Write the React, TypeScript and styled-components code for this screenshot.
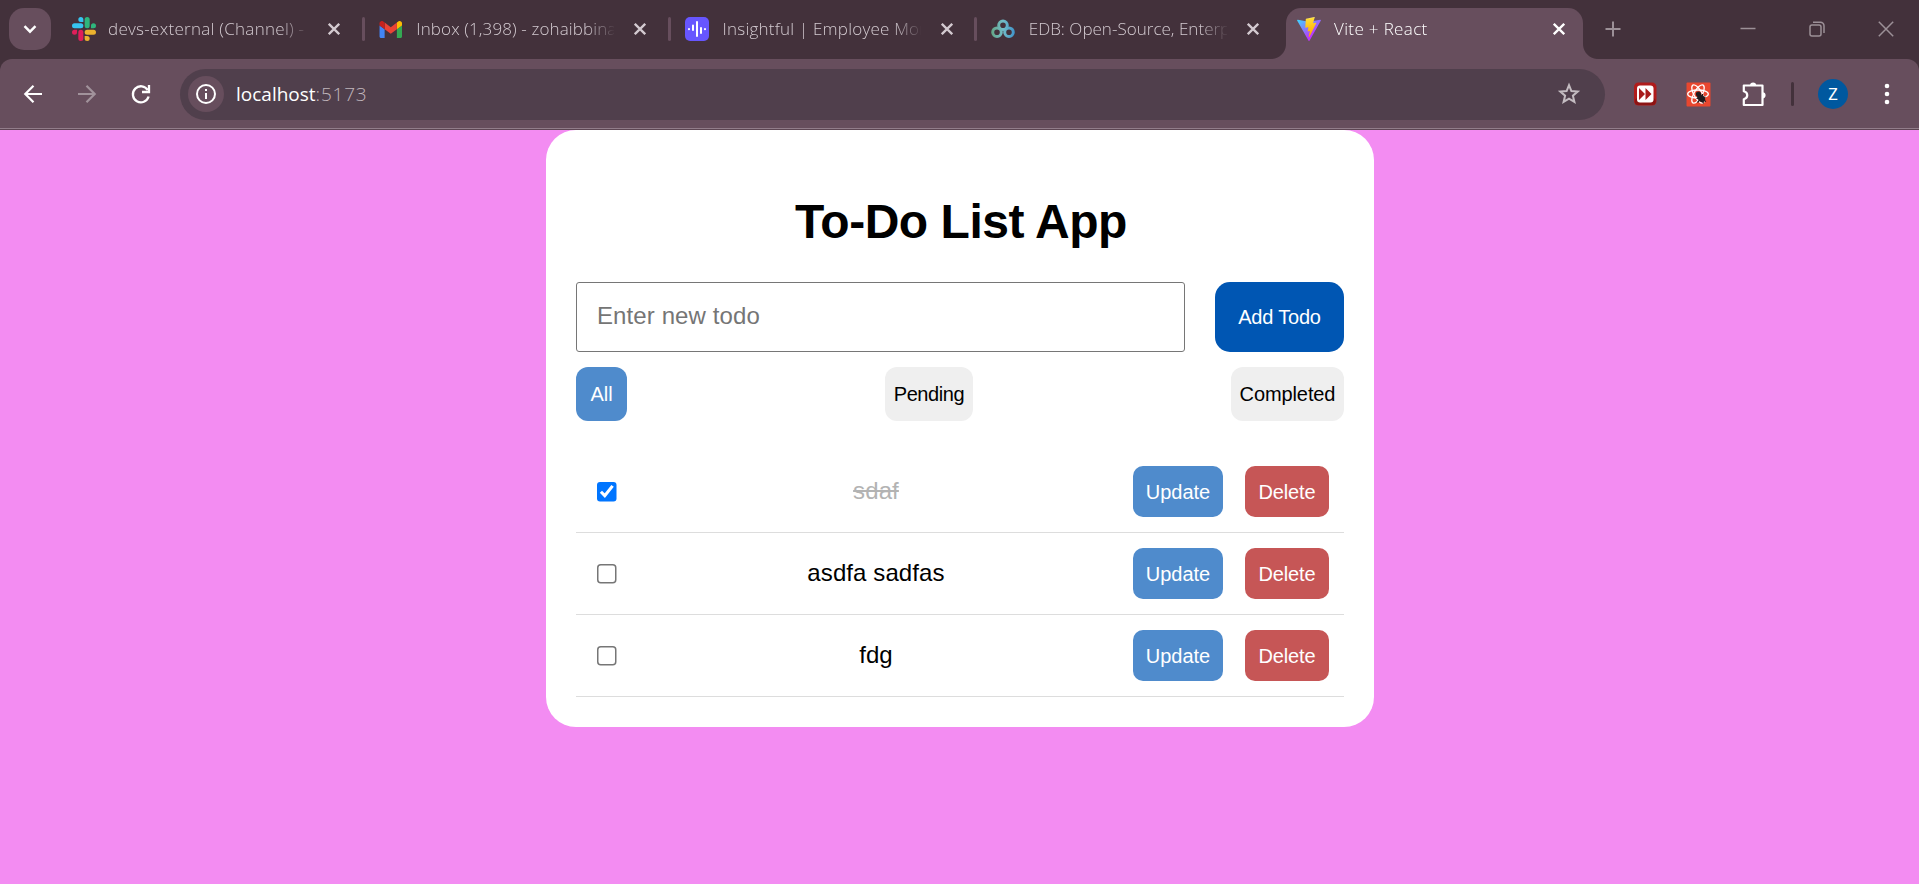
import React from 'react';
import styled, { createGlobalStyle, css } from 'styled-components';

const GlobalStyle = createGlobalStyle`
  *, *::before, *::after { box-sizing: border-box; }
  html, body { margin: 0; padding: 0; }
  body { background: #f38cf2; font-family: "Liberation Sans", Arial, sans-serif; }
  button, input { font-family: inherit; }
`;

const Screen = styled.div`
  width: 1919px;
  height: 884px;
  overflow: hidden;
  display: flex;
  flex-direction: column;
  background: #f38cf2;
`;

/* ---------- browser chrome ---------- */

const Browser = styled.header`
  flex: none;
  background: #43313b;
  font-family: "Open Sans", "Noto Sans", sans-serif;
`;

const TabStrip = styled.div`
  height: 59px;
  display: flex;
  align-items: flex-start;
  padding: 8px 0 0 9px;
`;

const TabSearch = styled.button`
  width: 42px;
  height: 42px;
  margin-right: 9px;
  padding: 0;
  border: 0;
  border-radius: 15px;
  background: #674e5d;
  display: flex;
  align-items: center;
  justify-content: center;
`;

const Tab = styled.div<{ $active?: boolean }>`
  position: relative;
  flex: none;
  display: flex;
  align-items: center;
  width: 306.25px;
  height: 42px;
  padding-left: 12px;
  color: #d3cad0;
  ${(p) =>
    p.$active &&
    css`
      width: 297px;
      height: 51px;
      margin-left: 1px;
      padding: 0 0 9px 11px;
      border-radius: 15px 15px 0 0;
      background: #674e5d;
      color: #fff;
      &::before,
      &::after {
        content: '';
        position: absolute;
        bottom: 0;
        width: 15px;
        height: 15px;
      }
      &::before {
        left: -15px;
        background: radial-gradient(circle at 0 0, transparent 14.5px, #674e5d 15.5px);
      }
      &::after {
        right: -15px;
        background: radial-gradient(circle at 100% 0, transparent 14.5px, #674e5d 15.5px);
      }
    `}
`;

const Favicon = styled.span`
  flex: none;
  width: 24px;
  height: 24px;
  margin-right: 12px;
  display: flex;
  align-items: center;
  justify-content: center;
`;

const TabTitle = styled.span<{ $tracking: number; $indent: number }>`
  flex: none;
  width: 200px;
  padding-left: ${(p) => p.$indent}px;
  overflow: hidden;
  white-space: pre;
  font-size: 17px;
  font-weight: 300;
  line-height: 26px;
  letter-spacing: ${(p) => p.$tracking}px;
  mask-image: linear-gradient(to right, #000 172px, transparent 202px);
`;

const CloseSlot = styled.span`
  width: 24px;
  margin-left: 14px;
  display: flex;
  justify-content: center;
`;

const TabDivider = styled.span`
  width: 3px;
  height: 24px;
  margin-left: auto;
  margin-right: 1.5px;
  border-radius: 1.5px;
  background: #674e5d;
`;

const NewTab = styled.span`
  width: 16px;
  height: 42px;
  margin-left: 22px;
  display: flex;
  align-items: center;
`;

const WindowControls = styled.div`
  height: 42px;
  margin-left: auto;
  margin-right: 25px;
  display: flex;
  align-items: center;
  gap: 53px;
`;

const Toolbar = styled.div`
  height: 71px;
  display: flex;
  align-items: center;
  padding: 0 22px 1px 21px;
  border-radius: 12px 12px 0 0;
  background: linear-gradient(#674e5d 69px, #927d8a 69px, #927d8a 70px, #5d4653 70px);
`;

const NavIcon = styled.span`
  width: 24px;
  height: 24px;
  margin-right: 30px;
  display: flex;
`;

const AddressBar = styled.div`
  width: 1425px;
  height: 51px;
  margin-left: -3px;
  display: flex;
  align-items: center;
  padding: 0 24px 0 8px;
  border-radius: 26px;
  background: #503f4c;
`;

const SiteInfo = styled.span`
  width: 36px;
  height: 36px;
  margin-right: 12px;
  border-radius: 50%;
  background: #674e5d;
  display: flex;
  align-items: center;
  justify-content: center;
`;

const Url = styled.span`
  flex: 1;
  font-size: 19px;
  line-height: 28px;
  color: #fff;
`;

const Host = styled.span`
  letter-spacing: 0;
`;

const Port = styled.span`
  font-weight: 300;
  color: #c0b6bc;
  letter-spacing: 0.8px;
`;

const Extensions = styled.div`
  flex: 1;
  display: flex;
  align-items: center;
  margin-left: 28px;
`;

const ExtIcon = styled.span<{ $gap: number }>`
  display: flex;
  margin-right: ${(p) => p.$gap}px;
`;

const ToolbarDivider = styled.span`
  width: 3px;
  height: 24px;
  border-radius: 1.5px;
  background: #43313b;
`;

const Avatar = styled.span`
  width: 30px;
  height: 30px;
  margin-left: 24px;
  border-radius: 50%;
  background: #00589f;
  color: #fff;
  font: 400 16px/31px Roboto, sans-serif;
  text-align: center;
`;

const MenuDots = styled.span`
  margin-left: auto;
  margin-right: 7px;
  display: flex;
`;

/* ---------- to-do card ---------- */

const Card = styled.main`
  flex: none;
  align-self: center;
  width: 828px;
  height: 597px;
  margin-right: -1px;
  padding: 60px 30px 30px;
  border-radius: 30px;
  background: #fff;
`;

const Heading = styled.h1`
  margin: 0 0 32px;
  height: 60px;
  padding-left: 2px;
  font-size: 48px;
  line-height: 64px;
  font-weight: 700;
  letter-spacing: -0.48px;
  text-align: center;
  color: #000;
`;

const EntryRow = styled.form`
  display: flex;
  gap: 30px;
  margin-bottom: 15px;
`;

const TextField = styled.input`
  flex: 1;
  min-width: 0;
  height: 70px;
  padding: 0 20px 2px;
  border: 1px solid #767676;
  border-radius: 3px;
  background: #fff;
  font-size: 24px;
  letter-spacing: 0.1px;
  &::placeholder {
    color: #757575;
  }
`;

const tones = {
  primary: ['#0056b3', '#fff'],
  blue: ['#4f8bcc', '#fff'],
  red: ['#c65656', '#fff'],
  plain: ['#efefef', '#000'],
};

const Button = styled.button<{
  $tone: keyof typeof tones;
  $w: number;
  $h: number;
  $r: number;
  $tracking?: number;
}>`
  flex: none;
  width: ${(p) => p.$w}px;
  height: ${(p) => p.$h}px;
  padding: 1px 0 0;
  border: 0;
  border-radius: ${(p) => p.$r}px;
  background: ${(p) => tones[p.$tone][0]};
  color: ${(p) => tones[p.$tone][1]};
  font-size: 20px;
  letter-spacing: ${(p) => p.$tracking ?? 0}px;
  white-space: nowrap;
`;

const Filters = styled.div`
  display: flex;
  justify-content: space-between;
  margin-bottom: 30px;
`;

const TodoList = styled.ul`
  margin: 0;
  padding: 0;
  list-style: none;
`;

const TodoRow = styled.li`
  display: flex;
  align-items: center;
  height: 82px;
  padding: 0 15px 0 21px;
  border-bottom: 1px solid #ddd;
`;

const CheckSlot = styled.label`
  width: 22px;
  padding-top: 1px;
  display: flex;
`;

const Checkbox = styled.input`
  zoom: 1.5;
  width: 13.34px;
  height: 13.34px;
  margin: 0;
`;

const TodoText = styled.span<{ $done?: boolean }>`
  flex: 1;
  padding-bottom: 2px;
  text-align: center;
  font-size: 24px;
  line-height: 28px;
  letter-spacing: 0.1px;
  color: ${(p) => (p.$done ? '#b3b3b3' : '#000')};
  text-decoration: ${(p) => (p.$done ? 'line-through' : 'none')};
`;

const Actions = styled.div`
  display: flex;
  gap: 22px;
`;

/* ---------- icons ---------- */

const SlackIcon = () => (
  <svg width="24" height="24" viewBox="0 0 24 24">
    <path fill="#e01e5a" d="M5.042 15.165a2.528 2.528 0 0 1-2.52 2.523A2.528 2.528 0 0 1 0 15.165a2.527 2.527 0 0 1 2.522-2.52h2.52v2.52zM6.313 15.165a2.527 2.527 0 0 1 2.521-2.52 2.527 2.527 0 0 1 2.521 2.52v6.313A2.528 2.528 0 0 1 8.834 24a2.528 2.528 0 0 1-2.521-2.522v-6.313z" />
    <path fill="#36c5f0" d="M8.834 5.042a2.528 2.528 0 0 1-2.521-2.52A2.528 2.528 0 0 1 8.834 0a2.528 2.528 0 0 1 2.521 2.522v2.52H8.834zM8.834 6.313a2.528 2.528 0 0 1 2.521 2.521 2.528 2.528 0 0 1-2.521 2.521H2.522A2.528 2.528 0 0 1 0 8.834a2.528 2.528 0 0 1 2.522-2.521h6.312z" />
    <path fill="#2eb67d" d="M18.956 8.834a2.528 2.528 0 0 1 2.522-2.521A2.528 2.528 0 0 1 24 8.834a2.528 2.528 0 0 1-2.522 2.521h-2.522V8.834zM17.688 8.834a2.528 2.528 0 0 1-2.523 2.521 2.527 2.527 0 0 1-2.52-2.521V2.522A2.527 2.527 0 0 1 15.165 0a2.528 2.528 0 0 1 2.523 2.522v6.312z" />
    <path fill="#ecb22e" d="M15.165 18.956a2.528 2.528 0 0 1 2.523 2.522A2.528 2.528 0 0 1 15.165 24a2.527 2.527 0 0 1-2.52-2.522v-2.522h2.52zM15.165 17.688a2.527 2.527 0 0 1-2.52-2.523 2.526 2.526 0 0 1 2.52-2.52h6.313A2.527 2.527 0 0 1 24 15.165a2.528 2.528 0 0 1-2.522 2.523h-6.313z" />
  </svg>
);

const GmailIcon = () => (
  <svg width="24" height="17" viewBox="46 42 94 66">
    <path fill="#4285f4" d="M58 108h14V74L52 59v43c0 3.32 2.69 6 6 6" />
    <path fill="#34a853" d="M120 108h14c3.32 0 6-2.69 6-6V59l-20 15" />
    <path fill="#fbbc04" d="M120 48v26l20-15v-8c0-7.42-8.47-11.65-14.4-7.2" />
    <path fill="#ea4335" d="M72 74V48l24 18 24-18v26L96 92" />
    <path fill="#c5221f" d="M52 51v8l20 15V48l-5.6-4.2c-5.94-4.45-14.4-.22-14.4 7.2" />
  </svg>
);

const InsightfulIcon = () => (
  <svg width="24" height="24" viewBox="0 0 24 24">
    <rect width="24" height="24" rx="5" fill="#6756ff" />
    <g stroke="#fff" strokeWidth="2" strokeLinecap="round">
      <path d="M4 12v.2M8 8.500v4.500M12 5v14M16 11v5M20 12v.2" />
    </g>
  </svg>
);

const EdbIcon = () => (
  <svg width="24" height="20" viewBox="0 0 24 20" fill="none" strokeWidth="3">
    <defs>
      <linearGradient id="edb" x1="0" y1="0" x2="24" y2="0" gradientUnits="userSpaceOnUse">
        <stop offset="0" stopColor="#63a583" />
        <stop offset=".5" stopColor="#72bcc8" />
        <stop offset="1" stopColor="#3e93cb" />
      </linearGradient>
    </defs>
    <g stroke="url(#edb)">
      <circle cx="6" cy="13.200" r="4.300" />
      <circle cx="18" cy="13.200" r="4.300" />
      <circle cx="12" cy="6.300" r="4.300" />
    </g>
  </svg>
);

const ViteIcon = () => (
  <svg width="24" height="24" viewBox="0 0 256 257">
    <defs>
      <linearGradient id="viteA" x1="-.828%" x2="57.636%" y1="7.652%" y2="78.411%">
        <stop offset="0%" stopColor="#41D1FF" />
        <stop offset="100%" stopColor="#BD34FE" />
      </linearGradient>
      <linearGradient id="viteB" x1="43.376%" x2="50.316%" y1="2.242%" y2="89.03%">
        <stop offset="0%" stopColor="#FFEA83" />
        <stop offset="8.333%" stopColor="#FFDD35" />
        <stop offset="100%" stopColor="#FFA800" />
      </linearGradient>
    </defs>
    <path fill="url(#viteA)" d="M255.153 37.938L134.897 252.976c-2.483 4.44-8.862 4.466-11.382.048L.875 37.958c-2.746-4.814 1.371-10.646 6.827-9.67l120.385 21.517a6.537 6.537 0 0 0 2.322-.004l117.867-21.483c5.438-.991 9.574 4.796 6.877 9.62Z" />
    <path fill="url(#viteB)" d="M185.432.063L96.44 17.501a3.268 3.268 0 0 0-2.634 3.014l-5.474 92.456a3.268 3.268 0 0 0 3.997 3.378l24.777-5.718c2.318-.535 4.413 1.507 3.936 3.838l-7.361 36.047c-.495 2.426 1.782 4.5 4.151 3.78l15.304-4.649c2.372-.72 4.652 1.36 4.15 3.788l-11.698 56.621c-.732 3.542 3.979 5.473 5.943 2.437l1.313-2.028l72.516-144.72c1.215-2.423-.88-5.186-3.54-4.672l-25.505 4.922c-2.396.462-4.435-1.77-3.759-4.114l16.646-57.705c.677-2.35-1.37-4.583-3.769-4.113Z" />
  </svg>
);

const CloseIcon = () => (
  <svg width="12" height="12" viewBox="0 0 12 12" stroke="currentColor" strokeWidth="2.300">
    <path d="M.8.8l10.400 10.400M11.200.8L.8 11.200" />
  </svg>
);

const ChevronIcon = () => (
  <svg width="14" height="9" viewBox="0 0 14 9" fill="none" stroke="#fff" strokeWidth="2.400">
    <path d="M1.500 1.200L7 6.700l5.500-5.500" />
  </svg>
);

const BackIcon = () => (
  <svg width="24" height="24" viewBox="0 0 24 24" fill="none" stroke="#fff" strokeWidth="2.200">
    <path d="M21 12H5M12.500 3.800L4.300 12l8.200 8.200" />
  </svg>
);

const ForwardIcon = () => (
  <svg width="24" height="24" viewBox="0 0 24 24" fill="none" stroke="#a1929b" strokeWidth="2.200">
    <path d="M3 12h16M11.500 3.800l8.200 8.200-8.200 8.200" />
  </svg>
);

const ReloadIcon = () => (
  <svg width="24" height="24" viewBox="0 0 24 24" fill="none" stroke="#fff" strokeWidth="2.300">
    <path d="M18.800 8.200A8 8 0 1 0 19.600 14.500" />
    <path d="M20 3v7h-7" />
  </svg>
);

const InfoIcon = () => (
  <svg width="22" height="22" viewBox="0 0 22 22" fill="none" stroke="#fff" strokeWidth="2">
    <circle cx="11" cy="11" r="9" />
    <path d="M11 10v6M11 6v2" />
  </svg>
);

const StarIcon = () => (
  <svg width="24" height="24" viewBox="0 0 24 24" fill="none" stroke="#c4bcc1" strokeWidth="2">
    <path d="M12 3.200l2.400 5.900 6.300.5-4.800 4.100 1.500 6.200L12 16.600l-5.400 3.300 1.500-6.200-4.800-4.100 6.300-.5z" />
  </svg>
);

const SkipIcon = () => (
  <svg width="24" height="24" viewBox="0 0 24 24">
    <rect x="1" y=".5" width="22.500" height="23" rx="4.500" fill="#b01c1c" />
    <rect x="1.800" y="16" width="21" height="7" rx="3.500" fill="#8c1414" />
    <rect x="4" y="3.500" width="16.500" height="17" rx="3" fill="#fff" />
    <path d="M6 6l6 6-6 6zM12.500 6l6 6-6 6z" fill="#a81c1c" />
  </svg>
);

const ReactDevIcon = () => (
  <svg width="25" height="25" viewBox="0 0 25 25">
    <rect x=".5" y=".5" width="24" height="24" rx="1" fill="#e8472f" />
    <g fill="none" stroke="#fff" strokeWidth="1.300">
      <ellipse cx="12" cy="12" rx="10.300" ry="4" />
      <ellipse cx="12" cy="12" rx="10.300" ry="4" transform="rotate(60 12 12)" />
      <ellipse cx="12" cy="12" rx="10.300" ry="4" transform="rotate(120 12 12)" />
    </g>
    <g fill="#1f1a1c" stroke="#1f1a1c" strokeWidth="1.200">
      <ellipse cx="15.200" cy="16.200" rx="3.800" ry="2.600" transform="rotate(45 15.200 16.200)" />
      <circle cx="12.500" cy="12" r="2" />
      <path fill="none" d="M10.500 16.500l3.500-.5M11.500 20.500l2.500-3M17.500 21.500l-1.500-4M16.500 12v4M19.500 15l-3.500 1M20 19.500l-4-2" />
    </g>
  </svg>
);

const PuzzleIcon = () => (
  <svg width="26" height="26" viewBox="0 0 26 26">
    <path
      d="M2.800 4.500h18.700v19.500H2.800v-5.800c4.600-1.200 4.600-6.800 0-8z"
      fill="none"
      stroke="#fff"
      strokeWidth="2.200"
      strokeLinejoin="round"
    />
    <path d="M9 4.500a3.100 3.100 0 0 1 6.200 0zM21.500 11.200a3.100 3.100 0 0 1 0 6.200z" fill="#fff" />
  </svg>
);

const tabs = [
  { title: 'devs-external (Channel) -', icon: <SlackIcon />, tracking: 0.28, indent: 0 },
  { title: 'Inbox (1,398) - zohaibbina', icon: <GmailIcon />, tracking: 0.12, indent: 2 },
  { title: 'Insightful | Employee Mon', icon: <InsightfulIcon />, tracking: 0.22, indent: 2 },
  { title: 'EDB: Open-Source, Enterp', icon: <EdbIcon />, tracking: 0.02, indent: 2 },
];

const todos = [
  { text: 'sdaf', done: true },
  { text: 'asdfa sadfas', done: false },
  { text: 'fdg', done: false },
];

export default function App() {
  return (
    <Screen>
      <GlobalStyle />
      <Browser>
        <TabStrip>
          <TabSearch aria-label="Search tabs">
            <ChevronIcon />
          </TabSearch>
          {tabs.map((tab, i) => (
            <Tab key={tab.title}>
              <Favicon>{tab.icon}</Favicon>
              <TabTitle $tracking={tab.tracking} $indent={tab.indent}>
                {tab.title}
              </TabTitle>
              <CloseSlot>
                <CloseIcon />
              </CloseSlot>
              {i < tabs.length - 1 && <TabDivider />}
            </Tab>
          ))}
          <Tab $active>
            <Favicon>
              <ViteIcon />
            </Favicon>
            <TabTitle $tracking={0.35} $indent={1}>
              Vite + React
            </TabTitle>
            <CloseSlot>
              <CloseIcon />
            </CloseSlot>
          </Tab>
          <NewTab>
            <svg width="16" height="16" viewBox="0 0 16 16" stroke="#9c9097" strokeWidth="2">
              <path d="M8 .5v15M.5 8h15" />
            </svg>
          </NewTab>
          <WindowControls>
            <svg width="16" height="16" viewBox="0 0 16 16" stroke="#9c9097" strokeWidth="1.500">
              <path d="M.5 7.500h15" />
            </svg>
            <svg width="16" height="16" viewBox="0 0 16 16" fill="none" stroke="#9c9097" strokeWidth="1.500">
              <rect x="1" y="4" width="11" height="11" rx="2" />
              <path d="M4 1.300h7.500a3.500 3.500 0 0 1 3.500 3.500v7.200" />
            </svg>
            <svg width="16" height="16" viewBox="0 0 16 16" stroke="#9c9097" strokeWidth="1.500">
              <path d="M.8.8l14.400 14.400M15.200.8L.8 15.200" />
            </svg>
          </WindowControls>
        </TabStrip>
        <Toolbar>
          <NavIcon>
            <BackIcon />
          </NavIcon>
          <NavIcon>
            <ForwardIcon />
          </NavIcon>
          <NavIcon>
            <ReloadIcon />
          </NavIcon>
          <AddressBar>
            <SiteInfo>
              <InfoIcon />
            </SiteInfo>
            <Url>
              <Host>localhost</Host>
              <Port>:5173</Port>
            </Url>
            <StarIcon />
          </AddressBar>
          <Extensions>
            <ExtIcon $gap={29}>
              <SkipIcon />
            </ExtIcon>
            <ExtIcon $gap={30}>
              <ReactDevIcon />
            </ExtIcon>
            <ExtIcon $gap={24}>
              <PuzzleIcon />
            </ExtIcon>
            <ToolbarDivider />
            <Avatar>Z</Avatar>
            <MenuDots>
              <svg width="6" height="22" viewBox="0 0 6 22" fill="#fff">
                <circle cx="3" cy="3" r="2.300" />
                <circle cx="3" cy="11" r="2.300" />
                <circle cx="3" cy="19" r="2.300" />
              </svg>
            </MenuDots>
          </Extensions>
        </Toolbar>
      </Browser>

      <Card>
        <Heading>To-Do List App</Heading>
        <EntryRow onSubmit={(e: React.FormEvent) => e.preventDefault()}>
          <TextField placeholder="Enter new todo" />
          <Button $tone="primary" $w={129} $h={70} $r={15} $tracking={-0.2}>
            Add Todo
          </Button>
        </EntryRow>
        <Filters>
          <Button $tone="blue" $w={51} $h={54} $r={12}>All</Button>
          <Button $tone="plain" $w={88} $h={54} $r={12} $tracking={-0.4}>Pending</Button>
          <Button $tone="plain" $w={113} $h={54} $r={12} $tracking={-0.1}>Completed</Button>
        </Filters>
        <TodoList>
          {todos.map((todo) => (
            <TodoRow key={todo.text}>
              <CheckSlot>
                <Checkbox type="checkbox" defaultChecked={todo.done} />
              </CheckSlot>
              <TodoText $done={todo.done}>{todo.text}</TodoText>
              <Actions>
                <Button $tone="blue" $w={90} $h={51} $r={10}>Update</Button>
                <Button $tone="red" $w={84} $h={51} $r={10} $tracking={-0.1}>Delete</Button>
              </Actions>
            </TodoRow>
          ))}
        </TodoList>
      </Card>
    </Screen>
  );
}
